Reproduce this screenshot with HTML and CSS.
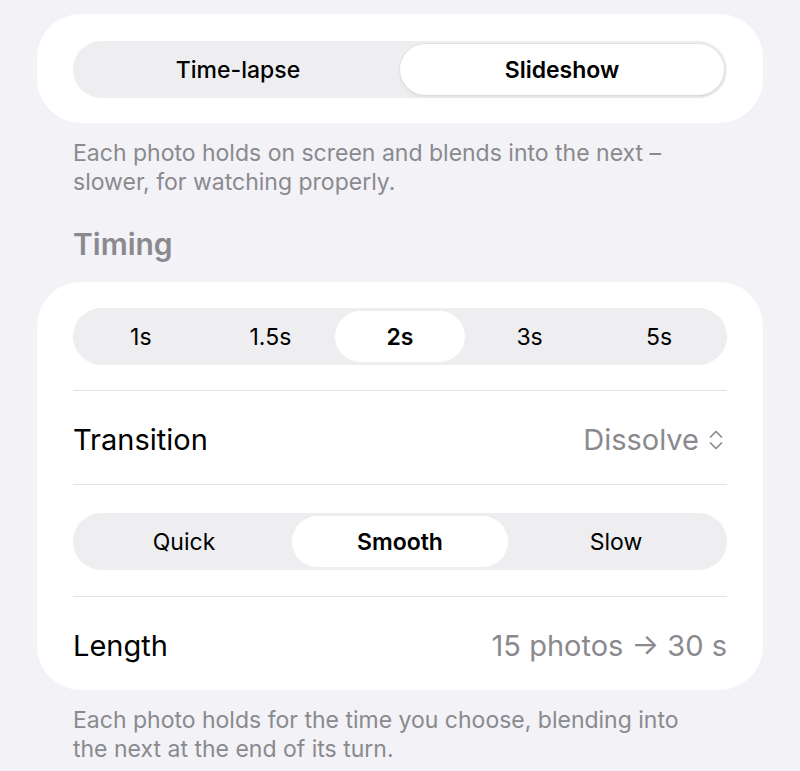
FILE: index.html
```html
<!DOCTYPE html>
<html lang="en">
<head>
    <meta charset="UTF-8">
    <meta name="viewport" content="width=device-width, initial-scale=1.0">
    <title>Playback</title>
    <link rel="stylesheet" href="styles.css">
</head>
<body>
    <div class="page">
        <div class="card card-mode">
            <div class="segmented">
                <div class="segment">Time-lapse</div>
                <div class="segment selected">Slideshow</div>
            </div>
        </div>
        <p class="footnote">Each photo holds on screen and blends into the next – slower, for watching properly.</p>

        <h2 class="section-title">Timing</h2>
        <div class="card">
            <div class="seg-wrap first">
                <div class="segmented compact">
                    <div class="segment">1s</div>
                    <div class="segment">1.5s</div>
                    <div class="segment selected">2s</div>
                    <div class="segment">3s</div>
                    <div class="segment">5s</div>
                </div>
            </div>
            <div class="row">
                <span class="label">Transition</span>
                <span class="value">Dissolve
                    <svg class="updown" width="16" height="26" viewBox="0 0 16 26" fill="none" stroke="currentColor" stroke-width="1.7" stroke-linecap="round" stroke-linejoin="round">
                        <path d="M2.5 10 L8 4.5 L13.5 10"/>
                        <path d="M2.5 16 L8 21.5 L13.5 16"/>
                    </svg>
                </span>
            </div>
            <div class="seg-wrap">
                <div class="segmented compact">
                    <div class="segment">Quick</div>
                    <div class="segment selected">Smooth</div>
                    <div class="segment">Slow</div>
                </div>
            </div>
            <div class="row">
                <span class="label">Length</span>
                <span class="value">15 photos → 30 s</span>
            </div>
        </div>
        <p class="footnote">Each photo holds for the time you choose, blending into the next at the end of its turn.</p>
    </div>
</body>
</html>
```

FILE: styles.css
```css
body {
    margin: 0;
    background-color: #f2f2f7;
    font-family: Inter, "Noto Sans", sans-serif;
    color: #000;
}
.page {
    padding: 14px 37px 0;
}
.card {
    background-color: #fff;
    border-radius: 44px;
    padding: 0 36px;
}
.card-mode {
    padding-top: 27px;
    padding-bottom: 25px;
}
.segmented {
    display: flex;
    height: 57px;
    padding: 3px;
    box-sizing: border-box;
    background-color: #eeeef0;
    border-radius: 29px;
}
.segment {
    flex: 1;
    display: flex;
    align-items: center;
    justify-content: center;
    font-size: 23px;
    font-weight: 500;
    border-radius: 26px;
}
.segment.selected {
    background-color: #fff;
    font-weight: 600;
    box-shadow: 0 0 0 1px rgba(0, 0, 0, 0.04), 0 2px 4px rgba(0, 0, 0, 0.06);
}
.compact .segment {
    font-weight: 400;
}
.compact .segment.selected {
    font-weight: 600;
    box-shadow: none;
}
.seg-wrap {
    padding: 28px 0 26px;
}
.seg-wrap.first {
    padding-top: 26px;
    padding-bottom: 25px;
}
.row {
    display: flex;
    justify-content: space-between;
    align-items: center;
    height: 94px;
    border-top: 1px solid #e2e2e5;
    font-size: 29px;
    padding-top: 4px;
    box-sizing: border-box;
}
.row + .seg-wrap {
    border-top: 1px solid #e2e2e5;
}
.value {
    color: #8a8a8e;
    display: flex;
    align-items: center;
    gap: 9px;
}
.updown {
    margin-right: 3px;
}
.footnote {
    margin: 0;
    padding: 16px 60px 0 36px;
    font-size: 23px;
    line-height: 29px;
    color: #8a8a8e;
}
.section-title {
    margin: 30px 0 21px;
    padding: 0 36px;
    font-size: 30px;
    line-height: 34px;
    font-weight: 600;
    color: #8a8a8e;
}
```
